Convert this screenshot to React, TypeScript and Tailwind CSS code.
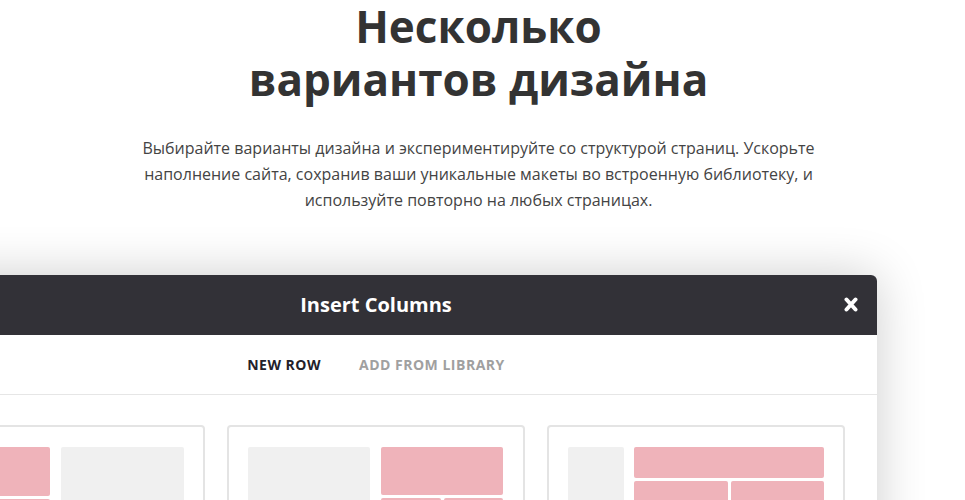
import React from "react";

const PINK = "bg-[#efb3ba]";
const GRAY = "bg-[#f0f0f0]";

function Stack({ top }: { top: string }) {
    return (
        <div className="flex flex-col gap-[3px]">
            <div className={`${top} rounded-[2px] ${PINK}`} />
            <div className="grid grid-cols-2 gap-[3px]">
                <div className={`h-[80px] rounded-[2px] ${PINK}`} />
                <div className={`h-[80px] rounded-[2px] ${PINK}`} />
            </div>
        </div>
    );
}

function Card({ children }: { children: React.ReactNode }) {
    return (
        <div className="w-[298px] shrink-0 rounded-[4px] border-2 border-[#e4e4e4] bg-white px-[19px] pt-[20px] pb-[20px]">
            {children}
        </div>
    );
}

export default function App() {
    return (
        <div
            className="w-full min-h-[500px] overflow-hidden bg-white"
            style={{ fontFamily: '"Open Sans", "Noto Sans", sans-serif' }}
        >
            {/* HERO TEXT */}
            <div className="flex flex-col items-center pr-[8px] text-center">
                <h1 className="text-[44px] leading-[53px] font-bold text-[#333333]">
                    Несколько
                    <br />
                    вариантов дизайна
                </h1>
                <p className="mt-[29px] max-w-[700px] text-[16px] leading-[26px] text-[#444444]">
                    Выбирайте варианты дизайна и экспериментируйте со структурой страниц. Ускорьте наполнение сайта,
                    сохранив ваши уникальные макеты во встроенную библиотеку, и используйте повторно на любых
                    страницах.
                </p>
            </div>

            {/* MODAL PREVIEW */}
            <div className="mt-[62px] -ml-[125px] w-[1002px] rounded-t-[6px] bg-white shadow-[0_0_50px_rgba(0,0,0,0.2)]">
                <div className="relative flex h-[60px] items-center justify-center rounded-t-[6px] bg-[#323137]">
                    <span className="text-[20px] font-bold text-white">Insert Columns</span>
                    <svg
                        className="absolute right-[19px] top-[22px]"
                        width="14"
                        height="15"
                        viewBox="0 0 14 15"
                    >
                        <path
                            d="M2.5 2.5 L11.5 12.5 M11.5 2.5 L2.5 12.5"
                            stroke="white"
                            strokeWidth="4"
                            strokeLinecap="round"
                        />
                    </svg>
                </div>

                <div className="flex h-[60px] items-center justify-center gap-[38px] border-b border-[#e6e6e6] text-[14px] font-bold tracking-[0.5px]">
                    <span className="text-[#23212a]">NEW ROW</span>
                    <span className="text-[#a0a0a0]">ADD FROM LIBRARY</span>
                </div>

                <div className="flex gap-[22px] px-[32px] pt-[30px] pb-[30px]">
                    <Card>
                        <div className="flex gap-[11px]">
                            <div className="w-[122px]">
                                <Stack top="h-[49px]" />
                            </div>
                            <div className={`h-[130px] w-[123px] rounded-[2px] ${GRAY}`} />
                        </div>
                    </Card>
                    <Card>
                        <div className="flex gap-[11px]">
                            <div className={`h-[130px] w-[122px] rounded-[2px] ${GRAY}`} />
                            <div className="w-[122px]">
                                <Stack top="h-[48px]" />
                            </div>
                        </div>
                    </Card>
                    <Card>
                        <div className="flex gap-[10px]">
                            <div className={`h-[130px] w-[56px] rounded-[2px] ${GRAY}`} />
                            <div className="w-[190px]">
                                <Stack top="h-[31px]" />
                            </div>
                        </div>
                    </Card>
                </div>
            </div>
        </div>
    );
}
